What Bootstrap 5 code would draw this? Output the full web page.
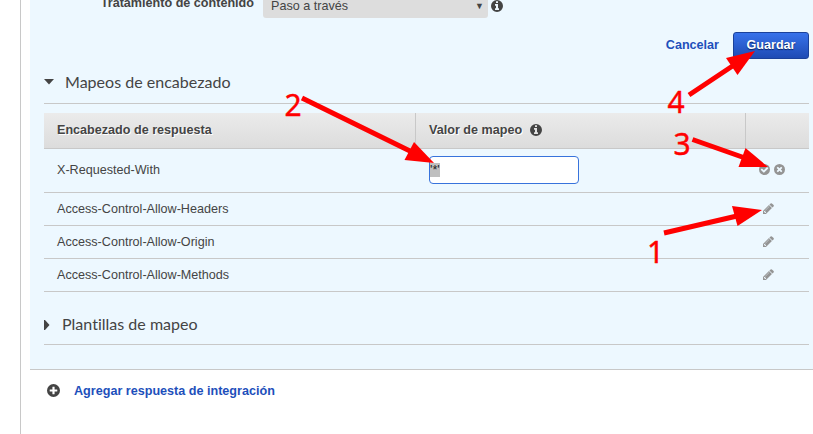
<!DOCTYPE html>
<html lang="es">
<head>
<meta charset="utf-8">
<title>Respuesta de integración</title>
<link href="https://cdn.jsdelivr.net/npm/bootstrap@5.3.0/dist/css/bootstrap.min.css" rel="stylesheet">
<style>
body{font-family:"Liberation Sans",Arial,sans-serif;font-size:12.6px;line-height:18px;color:#444;background:#fff;height:434px;overflow:hidden}
.frame{margin-left:20px;border-left:1px solid #c8c8c8;padding-left:9px;height:434px}
.panel{background:#edf8ff;border-bottom:1px solid #c8c8c8;height:370px;padding:0 4px 0 14px}
.content-row{height:32px}
.content-label{width:210px;height:18px;margin-top:-6px}
.content-select{width:225px;height:26px;margin:-8px 3px 0 9px;padding:5px 4px 3px 8px;background:#ddd;border-radius:3px}
.tri{font-size:9px}
.ico{fill:currentColor;display:block;flex:none}
.blue{color:#1d4fbb;text-decoration:none}
.save{width:76px;height:27px;padding:0;font-size:12.57px;line-height:23px;color:#fff;border:1px solid #1b419a;border-radius:3px;background:linear-gradient(#3872ea,#1f4bb4);text-shadow:0 1px 1px #0a2360}
.save:hover{color:#fff}
.cancel{margin-right:14px;padding-top:4px}
.section{font-family:Lato,sans-serif;font-size:16.05px;line-height:24px;font-variant-ligatures:none;border-bottom:1px solid #c8c8c8}
.section.open{height:45px;padding-top:11px}
.section.closed{height:53px;padding-top:20px}
.table.maps{table-layout:fixed;margin:9px 0 0;width:765px;color:inherit;border-color:#c8c8c8;border-collapse:separate;border-spacing:0}
.table.maps>*>*>*{padding:0 13px;background:none;border:0;border-bottom:1px solid #c8c8c8;height:33px;color:#444;vertical-align:middle;box-shadow:none}
.table.maps th{height:36px!important;padding-bottom:2px;background:linear-gradient(#ebebeb,#dcdcdc)!important;border-right:1px solid #c8c8c8!important;text-shadow:1px 1px 0 #fff}
.table.maps th:last-child{border-right:0!important}
.table.maps>tbody>.editing>td{height:44px;padding-bottom:1px}
.table.maps>tbody>tr>.tools{color:#949494;padding-bottom:2px}
.value{width:150px;height:28px;background:#fff;border:1px solid #3873dc;border-radius:4px}
.sel{background:#bfbfbf;height:14px;line-height:14px;color:#222}
.add{padding:12px 0 0 17px}
.add .ico{margin-right:14px;margin-top:-2px}
.notes{left:0;top:0;pointer-events:none}
.notes text{font:30px "Noto Sans","Open Sans",sans-serif;fill:red;stroke:red;stroke-width:.4}
</style>
<script src="https://cdn.jsdelivr.net/npm/bootstrap@5.3.0/dist/js/bootstrap.bundle.min.js"></script>
</head>
<body>
<svg class="d-none">
<symbol id="info" viewBox="0 0 1536 1536"><path fill-rule="evenodd" d="M1024 1248v-160q0-14-9-23t-23-9h-96v-512q0-14-9-23t-23-9h-320q-14 0-23 9t-9 23v160q0 14 9 23t23 9h96v320h-96q-14 0-23 9t-9 23v160q0 14 9 23t23 9h448q14 0 23-9t9-23zm-128-896v-160q0-14-9-23t-23-9h-192q-14 0-23 9t-9 23v160q0 14 9 23t23 9h192q14 0 23-9t9-23zM1536 768a768 768 0 1 1-1536 0a768 768 0 1 1 1536 0z"/></symbol>
<symbol id="check" viewBox="0 0 1536 1536"><path fill-rule="evenodd" d="M1284 606q0-28-18-46l-91-90q-19-19-45-19t-45 19l-408 407-226-226q-19-19-45-19t-45 19l-91 90q-18 18-18 46 0 27 18 45l362 362q19 19 45 19 27 0 46-19l543-543q18-18 18-45zM1536 768a768 768 0 1 1-1536 0a768 768 0 1 1 1536 0z"/></symbol>
<symbol id="times" viewBox="0 0 1536 1536"><path fill-rule="evenodd" d="M1149 994q0-26-19-45l-181-181 181-181q19-19 19-45 0-27-19-46l-90-90q-19-18-46-18-26 0-45 18l-181 181-181-181q-19-18-45-18-27 0-46 18l-90 90q-19 19-19 46 0 26 19 45l181 181-181 181q-19 19-19 45 0 27 19 46l90 90q19 18 46 18 26 0 45-18l181-181 181 181q19 18 45 18 27 0 46-18l90-90q19-19 19-46zM1536 768a768 768 0 1 1-1536 0a768 768 0 1 1 1536 0z"/></symbol>
<symbol id="plus" viewBox="0 0 1536 1536"><path fill-rule="evenodd" d="M1216 832v-128q0-26-19-45t-45-19h-256v-256q0-26-19-45t-45-19h-128q-26 0-45 19t-19 45v256h-256q-26 0-45 19t-19 45v128q0 26 19 45t45 19h256v256q0 26 19 45t45 19h128q26 0 45-19t19-45v-256h256q26 0 45-19t19-45zM1536 768a768 768 0 1 1-1536 0a768 768 0 1 1 1536 0z"/></symbol>
<symbol id="pencil" viewBox="0 128 1536 1536"><path d="M363 1536l91-91-235-235-91 91v107h128v128h107zm523-928q0-22-22-22-10 0-17 7l-542 542q-7 7-7 17 0 22 22 22 10 0 17-7l542-542q7-7 7-17zm-54-192l416 416-832 832h-416v-416zm683 96q0 53-37 90l-166 166-416-416 166-165q36-38 90-38 53 0 91 38l235 234q37 39 37 91z"/></symbol>
</svg>
<main class="frame">
  <section class="panel">
    <div class="content-row d-flex align-items-start">
      <div class="content-label fw-bold text-end">Tratamiento de contenido</div>
      <div class="content-select d-flex justify-content-between"><span>Paso a través</span><span class="tri">▼</span></div>
      <svg class="ico" width="12" height="12"><use href="#info"/></svg>
    </div>
    <div class="d-flex justify-content-end">
      <a class="blue fw-bold cancel" href="#">Cancelar</a>
      <button class="btn save fw-bold">Guardar</button>
    </div>
    <div class="section open d-flex">
      <svg class="ico mt-2" width="21" height="8"><path d="M0 1h10L5 6.500z"/></svg><span>Mapeos de encabezado</span>
    </div>
    <table class="table maps">
      <colgroup><col width="372"><col width="330"><col width="63"></colgroup>
      <thead><tr><th>Encabezado de respuesta</th><th><div class="d-flex align-items-center">Valor de mapeo<svg class="ico ms-2" width="12" height="12"><use href="#info"/></svg></div></th><th></th></tr></thead>
      <tbody>
        <tr class="editing"><td>X-Requested-With</td><td><div class="value d-flex align-items-center"><span class="sel">'*'</span></div></td><td class="tools"><div class="d-flex gap-1"><svg class="ico" width="11" height="11"><use href="#check"/></svg><svg class="ico" width="11" height="11"><use href="#times"/></svg></div></td></tr>
        <tr><td>Access-Control-Allow-Headers</td><td></td><td class="tools"><svg class="ico ms-1" width="11" height="11"><use href="#pencil"/></svg></td></tr>
        <tr><td>Access-Control-Allow-Origin</td><td></td><td class="tools"><svg class="ico ms-1" width="11" height="11"><use href="#pencil"/></svg></td></tr>
        <tr><td>Access-Control-Allow-Methods</td><td></td><td class="tools"><svg class="ico ms-1" width="11" height="11"><use href="#pencil"/></svg></td></tr>
      </tbody>
    </table>
    <div class="section closed d-flex">
      <svg class="ico mt-2" width="18" height="11"><path d="M0 0h1l4.500 5L1 10H0z"/></svg><span>Plantillas de mapeo</span>
    </div>
  </section>
  <div class="add d-flex align-items-center">
    <svg class="ico" width="13" height="13"><use href="#plus"/></svg><a class="blue fw-bold" href="#">Agregar respuesta de integración</a>
  </div>
</main>
<svg class="notes position-absolute" width="813" height="434">
  <g stroke="red" stroke-width="5"><path d="M689 95L734 65M302 98L412 152M692.500 139.500L745 158M664 233L737 216"/></g>
  <g fill="red"><path d="M755 51l-29 7 11.500 17z"/><path d="M434 163l-20-21-9.500 18z"/><path d="M768 167l-22.500-19-7 19z"/><path d="M762 210l-30-4 5.500 20z"/></g>
  <text x="667.500" y="113">4</text><text x="284.500" y="116">2</text><text x="673.500" y="154.500">3</text><text x="647" y="263">1</text>
</svg>
</body>
</html>
